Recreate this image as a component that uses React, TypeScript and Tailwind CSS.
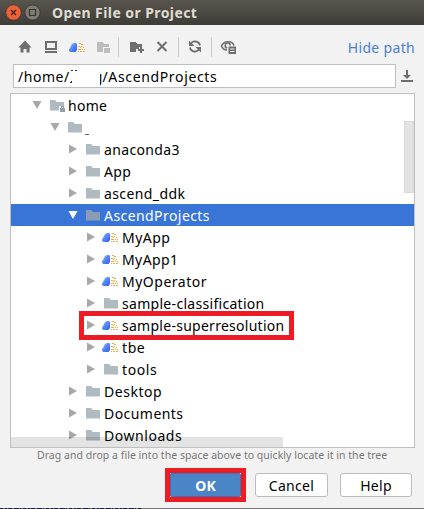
import React from "react";

type Kind = "folder" | "locked" | "ascend";
type Row = { name: string; pad: string; kind: Kind; open?: boolean; selected?: boolean; text?: string };

const rows: Row[] = [
  { name: "home", pad: "pl-[20px]", kind: "locked", open: true, text: "tracking-[0.3px]" },
  { name: "_", pad: "pl-[38px]", kind: "folder", open: true, text: "text-[9px] -ml-px pt-[5px]" },
  { name: "anaconda3", pad: "pl-[56px]", kind: "folder", text: "tracking-[0.35px]" },
  { name: "App", pad: "pl-[56px]", kind: "folder", text: "tracking-[0.4px]" },
  { name: "ascend_ddk", pad: "pl-[56px]", kind: "folder", text: "tracking-[0.4px]" },
  { name: "AscendProjects", pad: "pl-[56px]", kind: "folder", open: true, selected: true, text: "tracking-[0.43px]" },
  { name: "MyApp", pad: "pl-[74px]", kind: "ascend", text: "tracking-[0.45px]" },
  { name: "MyApp1", pad: "pl-[74px]", kind: "ascend", text: "tracking-[0.4px]" },
  { name: "MyOperator", pad: "pl-[74px]", kind: "ascend", text: "tracking-[0.5px]" },
  { name: "sample-classification", pad: "pl-[74px]", kind: "folder", text: "tracking-[0.3px]" },
  { name: "sample-superresolution", pad: "pl-[74px]", kind: "ascend", text: "tracking-[0.27px]" },
  { name: "tbe", pad: "pl-[74px]", kind: "ascend", text: "tracking-[0.6px]" },
  { name: "tools", pad: "pl-[74px]", kind: "folder", text: "tracking-[0.6px]" },
  { name: "Desktop", pad: "pl-[56px]", kind: "folder", text: "tracking-[0.55px]" },
  { name: "Documents", pad: "pl-[56px]", kind: "folder", text: "tracking-[0.45px]" },
  { name: "Downloads", pad: "pl-[56px]", kind: "folder", text: "tracking-[0.55px]" },
];

function AscendIcon() {
  return (
    <svg width="18" height="16" viewBox="0 0 18 16">
      <defs>
        <linearGradient id="ascend" x1="0" y1="0" x2="1" y2="1">
          <stop offset="0" stopColor="#9cc0ff" />
          <stop offset="0.5" stopColor="#5585f5" />
          <stop offset="1" stopColor="#2e5fe6" />
        </linearGradient>
      </defs>
      <path d="M1 10.500L2.500 8L4 5L6 4H8L9 5V11L7.500 13H2.500L1 12z" fill="url(#ascend)" />
      <path d="M11 4h2v1h-2zM13 5h2v1h-2zM10 7h2v1h-2zM13 7h1v1h-1zM12 8h1v1h-1zM15 8h1v1h-1zM10 10h3v1h-3zM14 10h1v1h-1zM16 10h1v1h-1zM10 12h1v1h-1zM12 12h2v1h-2zM15 12h2v1h-2z" fill="#f7a840" />
    </svg>
  );
}

function RowIcon({ kind, selected }: { kind: Kind; selected?: boolean }) {
  if (kind === "ascend") return <AscendIcon />;
  return (
    <svg width="18" height="16" viewBox="0 0 18 16">
      <path d="M2 3h5l2 2h7v8.500H2z" fill={selected ? "#8a9cb3" : "#afbac1"} />
      {kind === "locked" && (
        <>
          <path d="M11 9h6v6h-6z" fill="#fff" />
          <path d="M12 11h5v4h-5zM13 9h3v2h-1v-1h-1v1h-1z" fill="#8f9fad" />
        </>
      )}
    </svg>
  );
}

function Arrow({ open, selected }: { open?: boolean; selected?: boolean }) {
  return (
    <svg width="12" height="12" viewBox="0 0 12 12">
      <path d={open ? "M1.500 2h9L6 10z" : "M2 1.500v9L10 6z"} fill={selected ? "#fff" : "#a8a8a8"} />
    </svg>
  );
}

function Divider({ className }: { className: string }) {
  return <div className={`h-5 w-px shrink-0 bg-[#cbcbcb] ${className}`} />;
}

export default function App() {
  return (
    <div className="flex h-[509px] w-[424px] flex-col overflow-hidden bg-[#f2f2f2] font-['Noto_Sans',sans-serif] text-[14px] text-black">
      <header className="flex h-[25px] shrink-0 items-center bg-linear-to-b from-[#59564e] to-[#3e3c37] pl-[5px]">
        <svg width="36" height="18" viewBox="0 0 36 18">
          <circle cx="8.500" cy="8.500" r="7.700" fill="#ed6138" stroke="#37352f" strokeWidth=".7" />
          <path d="M6 6l5 5M11 6l-5 5" stroke="#3c2820" strokeWidth="1.300" />
          <circle cx="27.500" cy="8.500" r="7.600" fill="#7e7b73" stroke="#37352f" strokeWidth=".8" />
          <path d="M24.500 5.500h6v6h-6z" fill="none" stroke="#37352f" strokeWidth="1.200" />
        </svg>
        <h1 className="ml-[11px] text-[14px] leading-none font-bold tracking-[0.42px] text-[#dfdbd2]">Open File or Project</h1>
      </header>

      <div className="flex h-[39px] shrink-0 items-center pt-[5px] pl-[17px]">
        <svg width="16" height="16" viewBox="0 0 16 16"><path d="M8 1.500L14.500 8.500H12.500V13.500H9.500V10H6.500V13.500H3.500V8.500H1.500z" fill="#6e6e6e" /></svg>
        <svg className="ml-[10px]" width="16" height="16" viewBox="0 0 16 16" shapeRendering="crispEdges"><path d="M2 2h12v9H2zM4 4v5h8V4zM2 12h12v2H2z" fillRule="evenodd" fill="#6e6e6e" /></svg>
        <div className="ml-[9px]"><AscendIcon /></div>
        <svg className="ml-[9px]" width="16" height="16" viewBox="0 0 16 16" shapeRendering="crispEdges"><path d="M2 3h5l2 2h5v3H8v5H2zM9 9h6v5H9z" fill="#bdbdbd" /></svg>
        <Divider className="ml-[7px]" />
        <svg className="ml-[9px]" width="17" height="16" viewBox="0 0 17 16" shapeRendering="crispEdges"><path d="M2 3h5l2 2h5v3h-3v2H8v3H2zM12 8h2v2h2v2h-2v2h-2v-2h-2v-2h2z" fill="#6e6e6e" /></svg>
        <svg className="ml-[9px]" width="16" height="16" viewBox="0 0 16 16"><path d="M3.500 3l9 9M12.500 3l-9 9" stroke="#6e6e6e" strokeWidth="2" /></svg>
        <Divider className="ml-[8px]" />
        <svg className="ml-[8px]" width="16" height="16" viewBox="0 0 16 16"><path d="M3.500 5.500A5 5 0 0 1 13 6.500M12.500 9.500A5 5 0 0 1 3 8.500" fill="none" stroke="#6e6e6e" strokeWidth="1.800" /><path d="M2 1.500v5.500h5.500zM14 13.500V8H8.500z" fill="#6e6e6e" /></svg>
        <Divider className="ml-[8px]" />
        <svg className="ml-[8px]" width="17" height="16" viewBox="0 0 17 16"><path d="M14 6.500C12 1.500 4 1.500 1.500 7c1 2.500 3 4 5.500 4" fill="none" stroke="#6e6e6e" strokeWidth="1.600" /><path d="M10.200 6.500a2.500 2.500 0 1 0-3 2.500" fill="none" stroke="#6e6e6e" strokeWidth="1.600" /><path d="M8.500 7.500h7.500V15H8.500zM10 9.500v1h4.500v-1zM10 12v1h4.500v-1z" fillRule="evenodd" fill="#6e6e6e" /></svg>
        <a className="mr-[9px] ml-auto text-[14px] tracking-[0.32px] text-[#4a7fce]">Hide path</a>
      </div>

      <div className="flex h-6 shrink-0 items-center pl-[13px]">
        <div className="flex h-6 w-[383px] items-center border border-[#bfbfbf] bg-white pl-1">
          <span className="tracking-[0.55px]">/home/</span>
          <svg width="8" height="18" viewBox="0 0 8 18" shapeRendering="crispEdges"><path d="M1 3h2v1H1zM5 3h2v1H5zM0 15h2v1H0zM1 14h1v1H1z" fill="#333" /></svg>
          <span className="relative ml-[16px]">g<i className="absolute inset-y-0 left-0 w-[6px] bg-white" /></span>
          <span className="tracking-[0.65px]">/AscendProjects</span>
        </div>
        <svg className="ml-[4px]" width="14" height="14" viewBox="0 0 14 14"><path d="M6 1h2v5h3L7 10 3 6h3zM1 11h12v2H1z" fill="#6e6e6e" /></svg>
      </div>

      <main className="relative mt-[5px] ml-[10px] h-[355px] w-[405px] shrink-0 border border-[#bfbfbf] bg-white">
        {rows.map((row) => (
          <div key={row.name} className={`flex h-[22px] items-center ${row.pad} ${row.selected ? "bg-[#3875d7] text-white" : ""}`}>
            <Arrow open={row.open} selected={row.selected} />
            <div className={row.kind === "ascend" ? "ml-[4px] mr-px" : "ml-[5px]"}><RowIcon kind={row.kind} selected={row.selected} /></div>
            <div className="ml-[2px]"><span className={`block whitespace-nowrap ${row.text}`}>{row.name}</span></div>
          </div>
        ))}
        <div className="absolute top-[27px] right-0 h-[72px] w-[10px] border border-[#d9d9d9] bg-[#e2e2e2]" />
        <div className="absolute bottom-0 left-0 h-[10px] w-[272px] bg-black/11" />
        <div className="absolute top-[217px] left-[68px] h-[29px] w-[215px] border-5 border-[#ed1c24]" />
      </main>

      <p className="h-[20px] shrink-0 pl-[37px] text-[10.5px] leading-[14px] tracking-[0.035px] whitespace-nowrap text-[#777]">Drag and drop a file into the space above to quickly locate it in the tree</p>

      <footer className="flex h-[34px] shrink-0 items-center pl-[165px]">
        <div className="h-[34px] w-[81px] border-5 border-[#ed1c24]">
          <button className="h-6 w-full rounded-[2px] border border-[#3b73b3] bg-[#4a86c7] font-bold text-white">OK</button>
        </div>
        <button className="ml-[9px] h-6 w-[73px] rounded-[3px] border border-[#bcbcbc] bg-white tracking-[0.3px]">Cancel</button>
        <button className="ml-[12px] h-6 w-[72px] rounded-[3px] border border-[#bcbcbc] bg-white tracking-[0.3px]">Help</button>
      </footer>
      <div className="mt-auto h-px bg-[#77777a]">
        <svg className="block" width="142" height="1" viewBox="0 0 142 1" shapeRendering="crispEdges">
          <path d="M0 .5H142" stroke="#1b1947" strokeDasharray="3 2 2 1 4 2 5 1 1 2" />
        </svg>
      </div>
    </div>
  );
}
